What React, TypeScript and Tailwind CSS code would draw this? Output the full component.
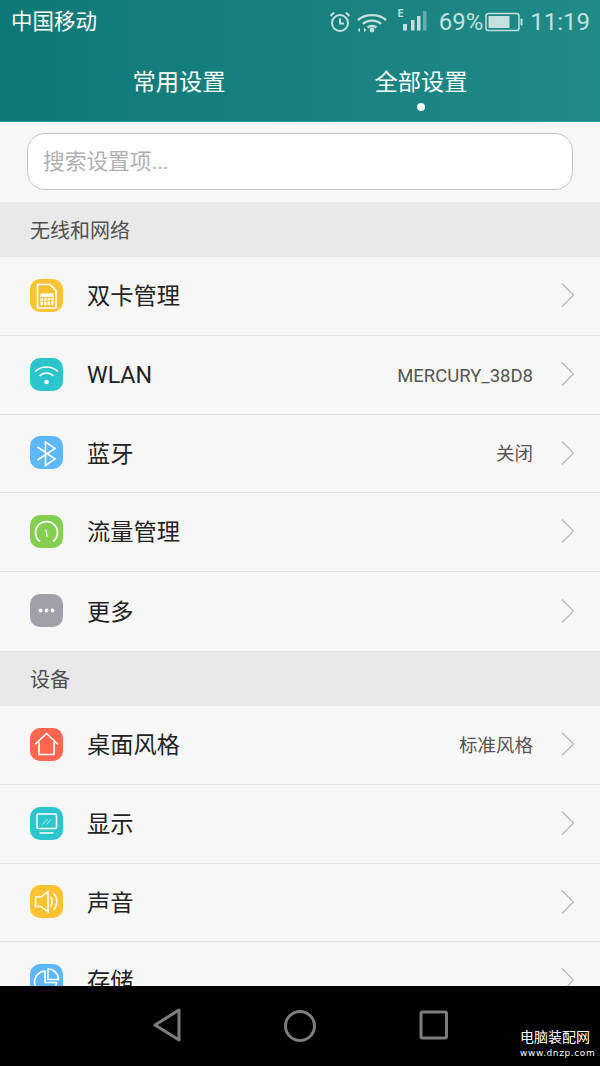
import type { ReactNode } from "react";

const cjk = { fontFamily: '"Roboto", "Noto Sans CJK SC", sans-serif' };

const Icon = ({ bg, children }: { bg: string; children: ReactNode }) => (
  <div className={"w-[33px] h-[33px] mb-[2px] rounded-[10px] shrink-0 flex items-center justify-center " + bg}>
    <svg width="33" height="33" viewBox="0 0 33 33" fill="none" stroke="#fff" strokeWidth="1.4">
      {children}
    </svg>
  </div>
);

const Chevron = () => (
  <svg width="14" height="26" viewBox="0 0 14 26" fill="none" stroke="#b4b4b4" strokeWidth="1.1" className="shrink-0">
    <path d="M1 1.5 L12.5 13 L1 24.5" />
  </svg>
);

const Row = ({ icon, label, value, h = "h-[79px]" }: { icon: ReactNode; label: string; value?: string; h?: string }) => (
  <div className={"flex items-center pl-[30px] pr-[25px] border-b border-[#e4e4e4] shrink-0 " + h}>
    {icon}
    <span className="ml-[24px] mt-[2px] text-[23.25px] text-[#222222] leading-none">{label}</span>
    {value && <span className="ml-auto mt-[2px] text-[18.5px] text-[#555555] leading-none">{value}</span>}
    <span className={"mb-[2px] " + (value ? "ml-[28px]" : "ml-auto")}>
      <Chevron />
    </span>
  </div>
);

const Section = ({ title, h }: { title: string; h: string }) => (
  <div className={"flex items-center pl-[30px] pt-[2px] bg-[#e9e9e9] text-[20px] text-[#505050] shrink-0 " + h}>{title}</div>
);

const sim = (
  <>
    <path d="M7.5 5.5 H20 L26 11.5 V29 H7.5 Z" strokeWidth="1.7" />
    <rect x="10.5" y="14.5" width="13" height="11.5" fill="#fff" stroke="none" />
    <path d="M10.5 18.5 H23.5 M10.5 22 H23.5 M13.5 18.5 V26 M17 18.5 V26 M20.5 18.5 V26" stroke="#ffc233" strokeWidth="1" />
  </>
);
const wifi = (
  <>
    <path d="M5 13.5 C11.5 7.5 21.5 7.5 28 13.5" strokeWidth="1.6" />
    <path d="M9.5 18 C13.5 14 19.5 14 23.5 18" strokeWidth="1.6" />
    <circle cx="16.5" cy="24" r="2.3" fill="#fff" stroke="none" />
  </>
);
const bluetooth = <path d="M7.5 11 L25 23 L15.5 29.5 V6 L25 12.5 L7.5 24" strokeWidth="1.6" />;
const gauge = (
  <>
    <path d="M10 26.5 A11 11 0 1 1 23 26.5" strokeWidth="1.8" />
    <path d="M16 14.5 L17 21.5" strokeWidth="1.4" />
  </>
);
const dots = (
  <g fill="#fff" stroke="none">
    <circle cx="10.5" cy="16.5" r="1.9" />
    <circle cx="16.5" cy="16.5" r="1.9" />
    <circle cx="22.5" cy="16.5" r="1.9" />
  </g>
);
const home = <path d="M5 16.5 L16.5 5.5 L28 16.5 M9 14 V26.5 H24 V14" strokeWidth="1.6" />;
const monitor = (
  <>
    <rect x="7" y="7" width="19.5" height="14.5" rx="1" strokeWidth="1.5" />
    <path d="M12.5 17.5 L17.5 12 M16.5 17.5 L21 12.5" strokeWidth="0.7" />
    <path d="M9.5 26 H23.5" strokeWidth="1.5" />
  </>
);
const speaker = (
  <>
    <path d="M5.5 12 H11 L18 6.5 V27 L11 21.5 H5.5 Z" strokeWidth="1.5" />
    <path d="M20.5 12 C22.5 15 22.5 18.5 20.5 21.5 M23.5 8.5 C28 13.5 28 20 23.5 25" strokeWidth="1.6" />
  </>
);
const pie = (
  <>
    <path d="M15 7 A11 11 0 1 0 26.5 18.5 H15 Z" strokeWidth="1.6" />
    <path d="M18 5 A10.5 10.5 0 0 1 28.5 15.5 H18 Z" strokeWidth="1.6" />
  </>
);

const StatusIcons = () => (
  <div className="flex items-center text-[#c4e0de]">
    <svg width="24" height="24" viewBox="0 0 24 24" fill="none" stroke="currentColor" strokeWidth="2" className="mr-[5px]">
      <circle cx="12" cy="13" r="8" />
      <path d="M12 8.5 V13.5 H16 M2.5 6 L6 2.5 M21.5 6 L18 2.5" />
    </svg>
    <svg width="30" height="24" viewBox="0 0 30 24" fill="none" stroke="currentColor" strokeWidth="2.4" className="mr-[11px]">
      <path d="M1 10 C8 3.5 22 3.5 29 10 M6 14 C10.5 9.5 19.5 9.5 24 14 M10.5 17.5 C13 15.5 17 15.5 19.5 17.5" />
      <circle cx="15" cy="20" r="2.4" fill="currentColor" stroke="none" />
      <path d="M3 17.5 L0.8 20 L3 22.5 Z M7 17.5 L9.2 20 L7 22.5 Z" fill="currentColor" stroke="none" />
    </svg>
    <div className="relative w-[30px] h-[24px] mr-[11px]">
      <span className="absolute left-0 top-[-1px] text-[10px] font-bold leading-none" style={cjk}>E</span>
      <svg width="30" height="24" viewBox="0 0 30 24" fill="currentColor" className="absolute left-0 top-0">
        <rect x="5" y="14" width="4" height="6.5" />
        <rect x="13" y="10" width="3.5" height="10.5" />
        <rect x="19" y="6" width="3.5" height="14.5" />
        <rect x="25" y="1" width="3.5" height="19.5" opacity="0.45" />
      </svg>
    </div>
    <span className="text-[24px] leading-none mr-[2px]">69%</span>
    <svg width="38" height="20" viewBox="0 0 38 20" fill="none" className="mr-[7px]">
      <rect x="1" y="1.5" width="33" height="17" rx="2.5" stroke="currentColor" strokeWidth="1.5" />
      <rect x="3.5" y="4" width="21" height="12" fill="currentColor" />
      <rect x="35.5" y="6.5" width="2" height="7" rx="1" fill="currentColor" />
    </svg>
    <span className="text-[24px] leading-none">11:19</span>
  </div>
);

export default function App() {
  return (
    <div className="w-[600px] h-[1066px] flex flex-col overflow-hidden bg-[#f7f7f7]" style={cjk}>
      <header className="h-[122px] shrink-0 bg-gradient-to-r from-[#0e7878] to-[#208a88] border-b border-[#2a9a96] flex flex-col">
        <div className="h-[43px] flex items-center justify-between pl-[11px] pr-[10px]">
          <span className="text-[21.5px] text-white leading-none">中国移动</span>
          <StatusIcons />
        </div>
        <div className="flex justify-center gap-[149px] mt-[25px] text-white text-[23.25px] leading-none">
          <span className="h-[30px] flex items-center">常用设置</span>
          <div className="relative h-[30px] flex items-center">
            全部设置
            <span className="absolute left-1/2 -translate-x-1/2 top-[35px] w-[8px] h-[8px] rounded-full bg-white" />
          </div>
        </div>
      </header>

      <main className="flex-1 min-h-0 overflow-hidden flex flex-col">
        <div className="h-[80px] shrink-0 px-[27px] pt-[11px]">
          <div className="h-[57px] rounded-[18px] border border-[#c4c4c4] bg-white flex items-center pl-[15px] pt-[2px] text-[21.7px] text-[#b0b0b0]">
            搜索设置项...
          </div>
        </div>
        <Section title="无线和网络" h="h-[55px]" />
        <Row icon={<Icon bg="bg-[#ffc233]">{sim}</Icon>} label="双卡管理" />
        <Row icon={<Icon bg="bg-[#2cc5cd]">{wifi}</Icon>} label="WLAN" value="MERCURY_38D8" />
        <Row icon={<Icon bg="bg-[#5cb8fb]">{bluetooth}</Icon>} label="蓝牙" value="关闭" h="h-[78px]" />
        <Row icon={<Icon bg="bg-[#84cf50]">{gauge}</Icon>} label="流量管理" />
        <Row icon={<Icon bg="bg-[#a0a0a8]">{dots}</Icon>} label="更多" h="h-[80px]" />
        <Section title="设备" h="h-[54px]" />
        <Row icon={<Icon bg="bg-[#ff6650]">{home}</Icon>} label="桌面风格" value="标准风格" />
        <Row icon={<Icon bg="bg-[#2cc5cd]">{monitor}</Icon>} label="显示" />
        <Row icon={<Icon bg="bg-[#ffc233]">{speaker}</Icon>} label="声音" h="h-[78px]" />
        <Row icon={<Icon bg="bg-[#5cb8fb]">{pie}</Icon>} label="存储" />
      </main>

      <nav className="relative h-[80px] shrink-0 bg-black flex items-center justify-center">
        <svg width="340" height="44" viewBox="0 0 340 44" fill="none" stroke="#7d7d7d" strokeWidth="3" strokeLinejoin="round">
          <path d="M49 6 L49 36 L25 21 Z" />
          <circle cx="170" cy="22" r="14.5" />
          <rect x="291" y="8" width="25.5" height="26" rx="1.5" />
        </svg>
        <div className="absolute left-[520px] top-[44px] text-white leading-none">
          <div className="text-[14px] tracking-[0px]">电脑装配网</div>
          <div className="text-[9px] tracking-[0.6px] mt-[5px]" style={{ fontFamily: '"DejaVu Sans", sans-serif' }}>www.dnzp.com</div>
        </div>
      </nav>
    </div>
  );
}
